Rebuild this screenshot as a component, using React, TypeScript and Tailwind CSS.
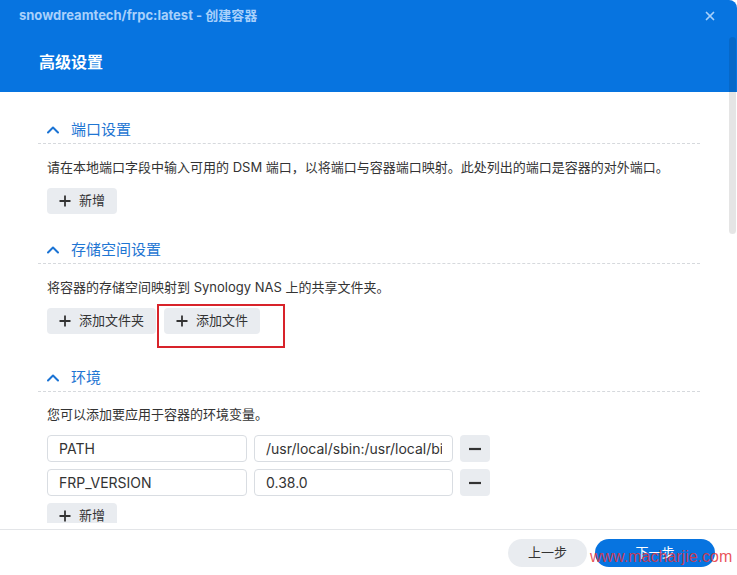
import { X } from 'lucide-react';
import type { ReactNode } from 'react';

function Chevron() {
  return (
    <svg width="12" height="8" viewBox="0 0 12 8" className="shrink-0">
      <polyline points="1,6.5 6,1.5 11,6.5" fill="none" stroke="#1a73d4" strokeWidth="2" strokeLinecap="round" strokeLinejoin="round" />
    </svg>
  );
}

function PlusIcon() {
  return (
    <svg width="12" height="12" viewBox="0 0 12 12" className="shrink-0">
      <path d="M6 0.5v11M0.5 6h11" stroke="#333" strokeWidth="1.8" />
    </svg>
  );
}

function MinusIcon() {
  return (
    <svg width="12" height="12" viewBox="0 0 12 12">
      <path d="M0 6h12" stroke="#333" strokeWidth="2.2" />
    </svg>
  );
}

function SectionHeader({ title, className = '' }: { title: string; className?: string }) {
  return (
    <div className={`flex items-center gap-[12px] pl-[9px] pb-[3px] border-b border-dashed border-[#d6d9dd] ${className}`}>
      <Chevron />
      <span className="text-[15px] leading-[20px] text-[#1f76d3]">{title}</span>
    </div>
  );
}

function GrayButton({ children }: { children: ReactNode }) {
  return (
    <button className="flex items-center gap-[8px] h-[26px] px-[12px] rounded-[4px] bg-[#e9ecf0] text-[13px] text-[#333]">
      <PlusIcon />
      <span>{children}</span>
    </button>
  );
}

function EnvRow({ name, value }: { name: string; value: string }) {
  return (
    <div className="flex items-center gap-[7px] h-[27px]">
      <input
        readOnly
        value={name}
        className="w-[200px] h-[27px] px-[11px] rounded-[4px] border border-[#d9dde2] text-[14px] text-[#333] outline-none bg-white"
      />
      <input
        readOnly
        value={value}
        className="w-[199px] h-[27px] pl-[11px] pr-[10px] rounded-[4px] border border-[#d9dde2] text-[14px] text-[#333] outline-none bg-white"
      />
      <button className="w-[30px] h-[27px] rounded-[4px] bg-[#e9ecf0] flex items-center justify-center">
        <MinusIcon />
      </button>
    </div>
  );
}

export default function App() {
  return (
    <div className="relative w-[737px] h-[575px] bg-white overflow-hidden font-['Inter','Noto_Sans_CJK_SC',sans-serif]">
      {/* header */}
      <div className="h-[92px] bg-[#0774e0] rounded-tr-[8px]">
        <div className="flex items-center justify-between h-[32px] pl-[19px] pr-[20px]">
          <span className="text-[13px] font-bold text-[#a8d0fb]">snowdreamtech/frpc:latest - 创建容器</span>
          <X size={14} strokeWidth={3} className="text-[#a8d0fb]" />
        </div>
        <div className="pl-[39px] pt-[18px] text-[16px] leading-[24px] font-bold text-white">高级设置</div>
      </div>

      {/* body */}
      <div className="h-[431px] overflow-hidden pl-[38px] pr-[37px] pt-[28px]">
        <SectionHeader title="端口设置" />
        <div className="pl-[9px]">
          <p className="mt-[13px] text-[13px] leading-[20px] text-[#333]">
            请在本地端口字段中输入可用的 DSM 端口，以将端口与容器端口映射。此处列出的端口是容器的对外端口。
          </p>
          <div className="mt-[11px] flex">
            <GrayButton>新增</GrayButton>
          </div>
        </div>

        <SectionHeader title="存储空间设置" className="mt-[26px]" />
        <div className="pl-[9px]">
          <p className="mt-[13px] text-[13px] leading-[20px] text-[#333]">
            将容器的存储空间映射到 Synology NAS 上的共享文件夹。
          </p>
          <div className="mt-[11px] flex gap-[8px]">
            <GrayButton>添加文件夹</GrayButton>
            <div className="relative">
              <GrayButton>添加文件</GrayButton>
              <div className="absolute left-[-7px] top-[-4px] w-[128px] h-[44px] border-2 border-[#d8232a] pointer-events-none" />
            </div>
          </div>
        </div>

        <SectionHeader title="环境" className="mt-[34px]" />
        <div className="pl-[9px]">
          <p className="mt-[12px] text-[13px] leading-[20px] text-[#333]">您可以添加要应用于容器的环境变量。</p>
          <div className="mt-[11px] flex flex-col gap-[7px]">
            <EnvRow name="PATH" value="/usr/local/sbin:/usr/local/bin:/usr/sbin:/usr/bin:/sbin:/bin" />
            <EnvRow name="FRP_VERSION" value="0.38.0" />
            <div className="flex">
              <GrayButton>新增</GrayButton>
            </div>
          </div>
        </div>
      </div>

      {/* footer */}
      <div className="mt-[6px] border-t border-[#e3e5e8] flex justify-end gap-[8px] pr-[22px] pt-[9px]">
        <button className="w-[79px] h-[28px] rounded-full bg-[#e9ecf0] text-[13px] text-[#333]">上一步</button>
        <button className="w-[120px] h-[28px] rounded-full bg-[#0774e0] text-[13px] text-white">下一步</button>
      </div>

      {/* scrollbar */}
      <div className="absolute right-[1px] top-[37px] w-[7px] h-[197px] rounded-full bg-black/10" />

      {/* watermark */}
      <span className="absolute left-[590px] top-[548px] text-[16px] leading-[18px] font-['Liberation_Sans',sans-serif] text-[#e5323a]/85 pointer-events-none">
        www.macharjie.com
      </span>
    </div>
  );
}
